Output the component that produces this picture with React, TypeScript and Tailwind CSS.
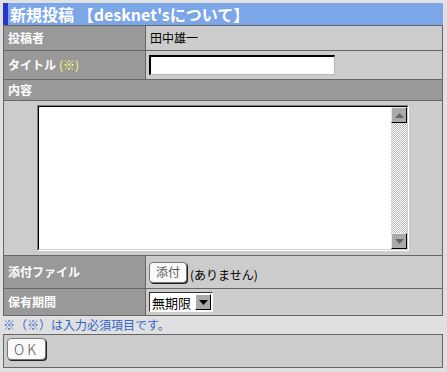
import React from 'react';

const Label = ({ children }: { children: React.ReactNode }) => (
  <div className="flex items-center border-r border-[#666] bg-[#999] pl-[4px] font-bold text-white">
    {children}
  </div>
);

const OldButton = ({ label, className = '' }: { label: string; className?: string }) => (
  <button
    className={`flex items-center justify-center rounded-[4px] border border-[#777] bg-[#fafafa] text-[#555] shadow-[1px_1px_0_#222] ${className}`}
  >
    {label}
  </button>
);

const ScrollBtn = ({ up }: { up: boolean }) => (
  <div className="flex h-[16px] w-[16px] items-center justify-center border-b border-r border-b-black border-r-black border-t border-l border-t-[#e8e8e8] border-l-[#e8e8e8] bg-[#aaa]">
    <svg width="9" height="5" viewBox="0 0 9 5">
      {up ? <path d="M4.5 0 L9 5 L0 5 Z" fill="#666" /> : <path d="M0 0 L9 0 L4.5 5 Z" fill="#666" />}
    </svg>
  </div>
);

export default function App() {
  return (
    <div className="min-h-[372px] bg-[#e0e0e0] pt-[3px] font-['Noto_Sans_CJK_JP',sans-serif] text-[12px] leading-none text-black">
      <div className="ml-[3px] flex h-[22px] w-[440px] items-center border-l-[5px] border-[#2a35c8] bg-[#7ba6e8] pl-[2px] text-[16px] font-bold text-white">
        新規投稿 【desknet'sについて】
      </div>

      <div className="ml-[3px] w-[440px] border-x border-b border-[#666]">
        <div className="grid h-[25px] grid-cols-[142px_1fr] border-t border-[#666]">
          <Label>投稿者</Label>
          <div className="flex items-center bg-[#ccc] pl-[4px]">田中雄一</div>
        </div>

        <div className="grid h-[29px] grid-cols-[142px_1fr] border-t border-[#666]">
          <Label>
            タイトル<span className="ml-[3px] font-normal text-[#ffff66]">(※)</span>
          </Label>
          <div className="flex items-center bg-[#ccc] pl-[3px]">
            <div className="h-[20px] w-[186px] border-l-2 border-t-2 border-b border-r border-l-black border-t-black border-b-[#bbb] border-r-[#bbb] bg-white" />
          </div>
        </div>

        <div className="flex h-[21px] items-center border-t border-[#666] bg-[#999] pl-[4px] font-bold text-white">
          内容
        </div>

        <div className="flex h-[155px] justify-center border-t border-[#666] bg-[#ccc] pt-[4px]">
          <div className="h-[146px] w-[372px] border border-t-[#808080] border-l-[#808080] border-b-white border-r-white">
            <div className="flex h-full w-full border border-t-black border-l-black border-b-[#d4d0c8] border-r-[#d4d0c8] bg-white">
              <textarea className="h-full flex-1 resize-none bg-white outline-none" />
              <div className="flex w-[16px] flex-col bg-[repeating-conic-gradient(#b8b8b8_0_25%,#fff_0_50%)] bg-[length:2px_2px]">
                <ScrollBtn up />
                <div className="flex-1" />
                <ScrollBtn up={false} />
              </div>
            </div>
          </div>
        </div>

        <div className="grid h-[33px] grid-cols-[142px_1fr] border-t border-[#666]">
          <Label>添付ファイル</Label>
          <div className="flex items-center bg-[#ccc] pl-[3px]">
            <OldButton label="添付" className="h-[21px] w-[38px]" />
            <span className="ml-[3px] mt-[6px]">(ありません)</span>
          </div>
        </div>

        <div className="grid h-[27px] grid-cols-[142px_1fr] border-t border-[#666]">
          <Label>保有期間</Label>
          <div className="flex items-center bg-[#ccc] pl-[3px]">
            <div className="flex h-[20px] w-[64px] items-center border border-t-[#333] border-l-[#333] border-b-white border-r-white bg-white">
              <span className="flex-1 pl-[2px] text-[13px]">無期限</span>
              <div className="mr-[1px] flex h-[16px] w-[16px] items-center justify-center border-b border-r border-b-black border-r-black border-t border-l border-t-white border-l-white bg-[#aaa]">
                <svg width="9" height="5" viewBox="0 0 9 5">
                  <path d="M0 0 L9 0 L4.5 5 Z" fill="#000" />
                </svg>
              </div>
            </div>
          </div>
        </div>
      </div>

      <div className="flex h-[18px] items-center pl-[3px] text-[#3366cc]">※（※）は入力必須項目です。</div>

      <div className="ml-[3px] h-[34px] w-[440px] border border-[#666] bg-[#ccc] pl-[3px] pt-[3px]">
        <OldButton label="OK" className="h-[22px] w-[39px] text-[14px] font-light tracking-[3px] text-[#444]" />
      </div>
    </div>
  );
}
